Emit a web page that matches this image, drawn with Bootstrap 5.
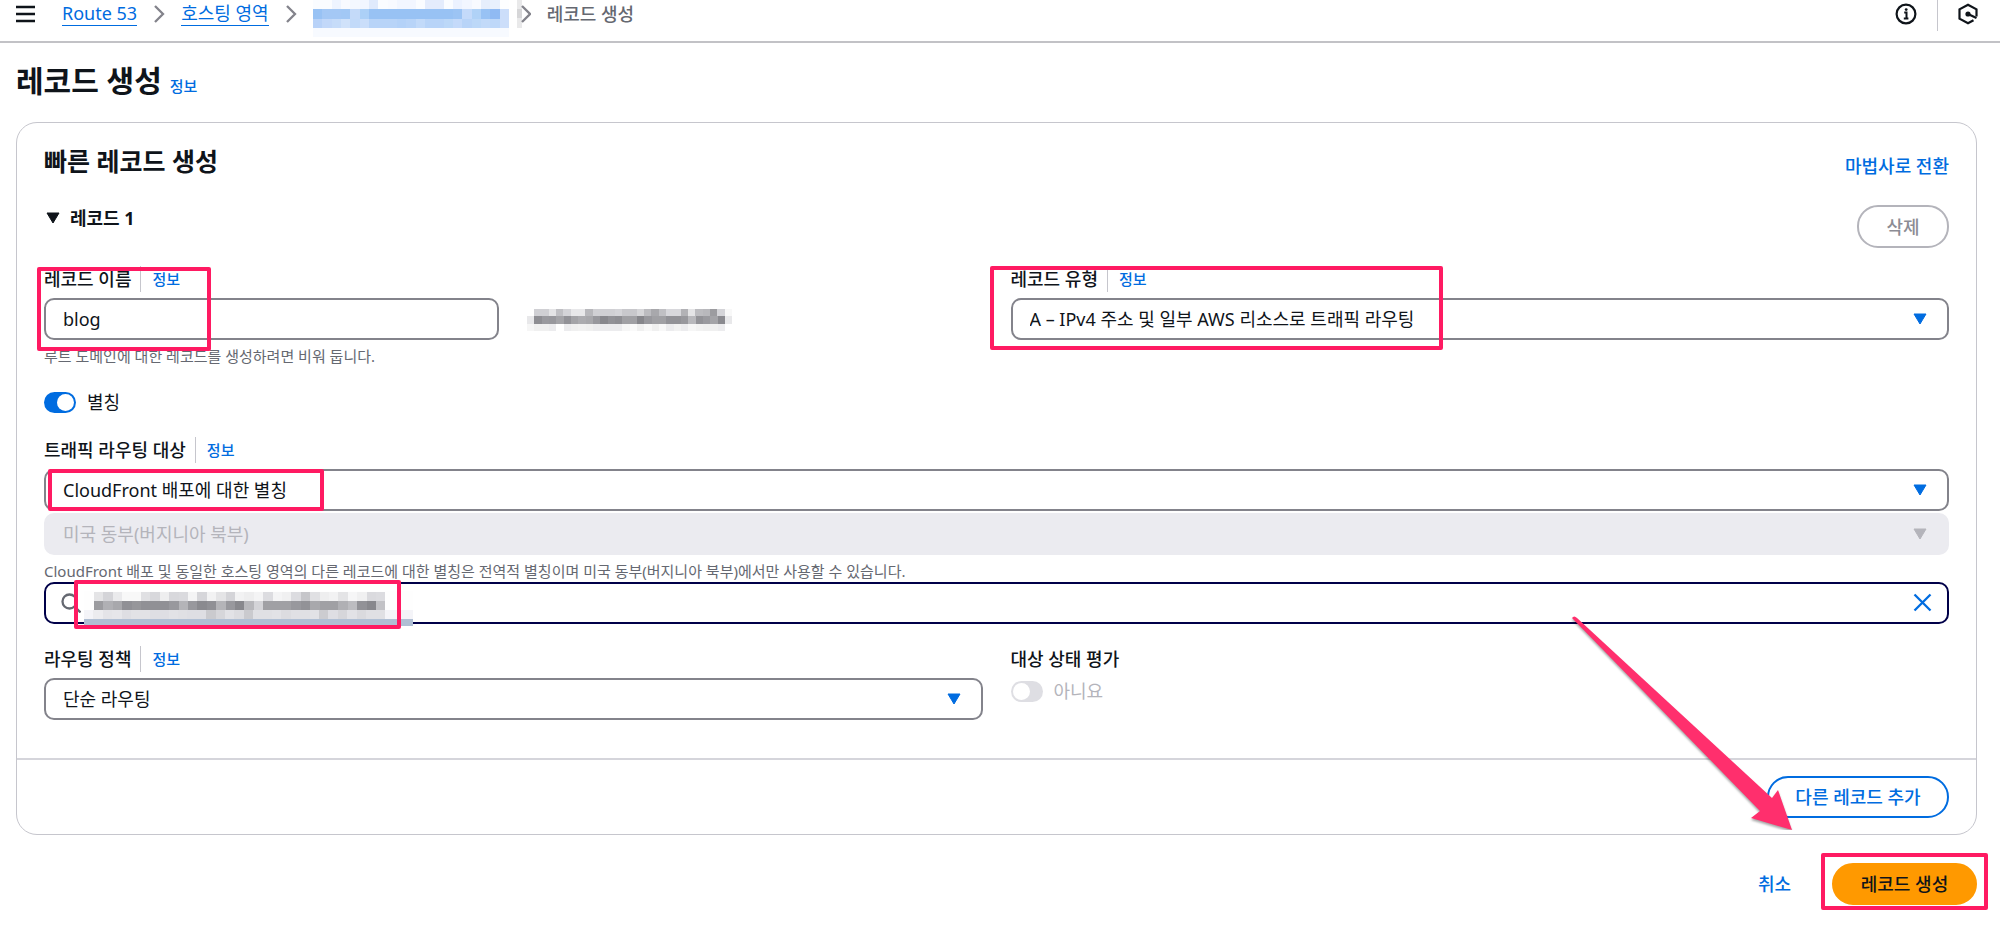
<!DOCTYPE html>
<html lang="ko">
<head>
<meta charset="utf-8">
<meta name="viewport" content="width=device-width, initial-scale=1">
<title>레코드 생성 | Route 53</title>
<link href="https://cdn.jsdelivr.net/npm/bootstrap@5.3.0/dist/css/bootstrap.min.css" rel="stylesheet">
<style>
  :root { --blue: #006ce0; --ink: #0f141a; --muted-ink: #656871; --pink: #ff1a62; }
  body { font-family: "Noto Sans", "Noto Sans CJK KR", sans-serif; font-size: 18px; line-height: 26px; color: var(--ink); background: #fff; }
  a { color: var(--blue); text-decoration: none; }
  .topbar { height: 43px; border-bottom: 2px solid #c2c2c6; padding: 0 22px 0 16px; }
  .topbar .crumbs { height: 28px; gap: 16px; line-height: 22px; }
  .crumbs a { border-bottom: 1px solid var(--blue); line-height: 23px; }
  .crumbs .menu-btn { margin-right: 11px; }
  .topbar .last-crumb { color: var(--muted-ink); font-weight: 500; }
  .icon-btn { border: 0; background: none; padding: 0; color: var(--ink); display: flex; }
  .tools { gap: 20px; }
  .tool-sep { width: 1px; height: 31px; background: #c6c6cd; }
  main { padding: 18px 23px 0 16px; }
  .title-row { margin-bottom: 21px; }
  h1 { font-size: 30px; line-height: 40px; font-weight: 700; }
  h2 { font-size: 25px; line-height: 36px; font-weight: 700; }
  .info { font-size: 15px; font-weight: 500; }
  .panel { border: 1px solid #c6c6cd; border-radius: 21px; }
  .panel-main { padding: 20px 27px 38px; }
  .panel-foot { border-top: 2px solid #d5d5db; padding: 16px 27px; }
  .record-head { margin-top: 26px; }
  .wizard-link, .cancel { font-weight: 500; }
  .btn.pill { height: 42px; border-radius: 21px; border: 2px solid; font-size: 18px; font-weight: 500; padding: 0; background: #fff; line-height: 26px; }
  .btn.pill-off, .btn.pill-off:disabled { color: #8c8c94; border-color: #b4b4bb; width: 92px; height: 43px; opacity: 1; }
  .btn.pill-line { color: var(--blue); border-color: var(--blue); width: 182px; }
  .btn.pill-main, .btn.pill-main:hover { background: #ff9900; border-color: #ff9900; color: var(--ink); width: 145px; }
  .grid-2 { display: grid; grid-template-columns: 1fr 1fr; column-gap: 28px; }
  .first-fields { margin-top: 18px; }
  .label-row { display: flex; align-items: center; height: 26px; margin-bottom: 6px; }
  .label-row label, .label-row .name { font-weight: 500; }
  .label-row .info { border-left: 1px solid #c6c6cd; margin-left: 9px; padding-left: 11px; }
  .field.form-control, .field.form-select { height: 42px; border: 2px solid #83838b; border-radius: 10px; padding: 0 17px; font-size: 18px; line-height: 26px; color: var(--ink); }
  .field.form-select { background-image: url("data:image/svg+xml,%3Csvg xmlns='http://www.w3.org/2000/svg' viewBox='0 0 14 12'%3E%3Cpath d='M1 1h12L7 11z' fill='%23006ce0' stroke='%23006ce0' stroke-linejoin='round'/%3E%3C/svg%3E"); background-size: 14px 12px; background-position: right 20px center; }
  .field.form-select:disabled { background-color: #ebebf0; border-color: #ebebf0; color: #b4b4bb; opacity: 1; background-image: url("data:image/svg+xml,%3Csvg xmlns='http://www.w3.org/2000/svg' viewBox='0 0 14 12'%3E%3Cpath d='M1 1h12L7 11z' fill='%23b4b4bb' stroke='%23b4b4bb' stroke-linejoin='round'/%3E%3C/svg%3E"); }
  .field.search-field { border-color: #000049; padding-left: 48px; }
  .region { margin-top: 2px; }
  .hint { font-size: 15px; line-height: 22px; margin-top: 5px; color: var(--muted-ink); }
  .toggle-row { display: flex; align-items: center; gap: 11px; height: 26px; }
  .form-check-input.toggle { width: 32px; height: 21px; margin: 0; border: 0; border-radius: 11px; background-color: #dedee3; background-size: 17px; background-position: 2px center; background-image: url("data:image/svg+xml,%3Csvg xmlns='http://www.w3.org/2000/svg' viewBox='0 0 17 17'%3E%3Ccircle cx='8.5' cy='8.5' r='8.5' fill='%23fff'/%3E%3C/svg%3E"); }
  .form-check-input.toggle:checked { background-color: var(--blue); background-position: 13px center; }
  .form-check-input.toggle:disabled, .form-check-input.toggle:disabled ~ label { opacity: 1; }
  .off-text { color: #b4b4bb; }
  .block-gap { margin-top: 22px; }
  .actions { margin: 28px 0; gap: 41px; }
  .section-note { position: relative; }
  .callout { position: absolute; border: 4px solid var(--pink); border-radius: 2px; pointer-events: none; }
  .callout-name { left: -7px; top: 1px; width: 174px; height: 84px; }
  .callout-type { left: -21px; top: 0; width: 453px; height: 84px; }
  .callout-target { left: 4px; top: 0; width: 276px; height: 42px; }
  .callout-search { left: 30px; top: -2px; width: 327px; height: 49px; }
  .callout-submit { right: -11px; top: -10px; width: 167px; height: 57px; }
  .lens { position: absolute; left: 17px; top: 11px; }
  .clear { position: absolute; right: 17px; top: 11px; color: var(--blue); }
  .search-mask { position: absolute; left: 40px; top: 9px; }
  .arrow { position: absolute; right: 182px; bottom: 4px; pointer-events: none; }
</style>
</head>
<body>
<header class="topbar d-flex justify-content-between align-items-start">
  <nav class="crumbs d-flex align-items-center" aria-label="breadcrumb">
    <button class="icon-btn menu-btn" aria-label="메뉴"><svg width="19" height="18" viewBox="0 0 19 18" stroke="currentColor" stroke-width="2.4"><path d="M0 2h19M0 9h19M0 16h19"/></svg></button>
    <a href="#">Route 53</a>
    <svg width="12" height="18" viewBox="0 0 12 18" fill="none" stroke="#83838b" stroke-width="2.3"><path d="M2 1l8 8-8 8"/></svg>
    <a href="#">호스팅 영역</a>
    <svg width="12" height="18" viewBox="0 0 12 18" fill="none" stroke="#83838b" stroke-width="2.3"><path d="M2 1l8 8-8 8"/></svg>
    <span class="d-flex align-items-start align-self-start gap-2">
      <svg class="flex-shrink-0" id="zoneMask" width="196" height="37" viewBox="0 0 196 37" shape-rendering="crispEdges"></svg>
      <svg class="flex-shrink-0" width="14" height="28" viewBox="0 0 14 28" fill="none"><path d="M0 0h5v28H0z" fill="#e9e9ea"/><path d="M0 9h5v9H0z" fill="#d6d6d8"/><path d="M5 6l8 8-8 8" stroke="#83838b" stroke-width="2.3"/></svg>
    </span>
    <span class="last-crumb">레코드 생성</span>
  </nav>
  <div class="tools d-flex align-items-start">
    <button class="icon-btn" aria-label="정보"><svg width="22" height="28" viewBox="0 0 22 28" fill="none" stroke="currentColor"><circle cx="11" cy="14" r="9.4" stroke-width="2.2"/><path d="M9.200 12.600h2.300v6M8.800 18.600h4.600" stroke-width="2"/><circle cx="11.200" cy="9.600" r="1.400" fill="currentColor" stroke="none"/></svg></button>
    <div class="tool-sep"></div>
    <button class="icon-btn" aria-label="리소스"><svg width="20" height="28" viewBox="0 0 20 28" fill="none" stroke="currentColor" stroke-width="2.200"><path d="M18.500 16.500V9.300L10 4.700 1.500 9.300v9.400L10 23.300l5.500-3"/><path d="M10 14l8.500 4" stroke-width="2.400"/><circle cx="10" cy="14" r="2.600" fill="currentColor" stroke="none"/></svg></button>
  </div>
</header>

<main>
  <div class="title-row d-flex align-items-baseline gap-2">
    <h1 class="mb-0">레코드 생성</h1><a class="info" href="#">정보</a>
  </div>

  <form>
  <section class="panel position-relative">
    <div class="panel-main">
      <div class="d-flex justify-content-between align-items-end">
        <h2 class="mb-0">빠른 레코드 생성</h2><a class="wizard-link" href="#">마법사로 전환</a>
      </div>
      <div class="record-head d-flex justify-content-between align-items-start">
        <button type="button" class="icon-btn align-items-center gap-2 fw-bold"><svg width="18" height="12" viewBox="0 0 18 12"><path d="M3 1h12L9 11z" fill="#0f141a" stroke="#0f141a" stroke-linejoin="round"/></svg>레코드 1</button>
        <button type="button" class="btn pill pill-off" disabled>삭제</button>
      </div>

      <div class="grid-2 first-fields">
        <div class="section-note">
          <div class="label-row"><label for="rname">레코드 이름</label><a class="info" href="#">정보</a></div>
          <div class="grid-2 align-items-center">
            <input id="rname" class="form-control field" type="text" value="blog">
            <svg id="domainMask" width="205" height="24" viewBox="0 0 205 24" shape-rendering="crispEdges"></svg>
          </div>
          <div class="hint">루트 도메인에 대한 레코드를 생성하려면 비워 둡니다.</div>
          <div class="callout callout-name"></div>
        </div>
        <div class="section-note">
          <div class="label-row"><label for="rtype">레코드 유형</label><a class="info" href="#">정보</a></div>
          <select id="rtype" class="form-select field"><option>A – IPv4 주소 및 일부 AWS 리소스로 트래픽 라우팅</option></select>
          <div class="callout callout-type"></div>
        </div>
      </div>

      <div class="toggle-row block-gap"><input class="form-check-input toggle" type="checkbox" role="switch" id="alias" checked><label for="alias">별칭</label></div>

      <div class="label-row block-gap"><label for="target">트래픽 라우팅 대상</label><a class="info" href="#">정보</a></div>
      <div class="section-note">
        <select id="target" class="form-select field"><option>CloudFront 배포에 대한 별칭</option></select>
        <div class="callout callout-target"></div>
      </div>
      <select class="form-select field region" aria-label="리전" disabled><option>미국 동부(버지니아 북부)</option></select>
      <div class="hint">CloudFront 배포 및 동일한 호스팅 영역의 다른 레코드에 대한 별칭은 전역적 별칭이며 미국 동부(버지니아 북부)에서만 사용할 수 있습니다.</div>
      <div class="section-note">
        <input class="form-control field search-field" type="text" aria-label="배포 선택">
        <svg class="lens" width="20" height="20" viewBox="0 0 20 20" fill="none" stroke="#656871" stroke-width="2.3"><circle cx="8.500" cy="8.500" r="7"/><path d="M13.500 13.500l6 6"/></svg>
        <button type="button" class="icon-btn clear" aria-label="지우기"><svg width="19" height="19" viewBox="0 0 19 19" stroke="currentColor" stroke-width="2.3"><path d="M1.500 1.500l16 16M17.500 1.500l-16 16"/></svg></button>
        <svg class="search-mask" id="searchMask" width="330" height="35" viewBox="0 0 330 35" shape-rendering="crispEdges"></svg>
        <div class="callout callout-search"></div>
      </div>

      <div class="grid-2 block-gap">
        <div>
          <div class="label-row"><label for="policy">라우팅 정책</label><a class="info" href="#">정보</a></div>
          <select id="policy" class="form-select field"><option>단순 라우팅</option></select>
        </div>
        <div>
          <div class="label-row"><span class="name">대상 상태 평가</span></div>
          <div class="toggle-row"><input class="form-check-input toggle" type="checkbox" role="switch" id="health" disabled><label class="off-text" for="health">아니요</label></div>
        </div>
      </div>
    </div>
    <div class="panel-foot d-flex justify-content-end">
      <button type="button" class="btn pill pill-line">다른 레코드 추가</button>
    </div>
    <svg class="arrow" width="226" height="216" viewBox="0 0 226 216"><path d="M4 4Q6 1 9 4L204 184 210 176 224 216 183 204 192 197Z" fill="#ff2f6d" style="filter:drop-shadow(0 2px 1px rgba(0,0,0,.35))"/></svg>
  </section>

  <div class="actions d-flex justify-content-end align-items-center">
    <a class="cancel" href="#">취소</a>
    <div class="section-note">
      <button type="submit" class="btn pill pill-main d-block">레코드 생성</button>
      <div class="callout callout-submit"></div>
    </div>
  </div>
  </form>
</main>
<script src="https://cdn.jsdelivr.net/npm/bootstrap@5.3.0/dist/js/bootstrap.bundle.min.js"></script>
<script>
  // Redaction mosaics: each row is y, height, cell width, left offset and one colour per cell.
  function mosaic(id, rows) {
    const svg = document.getElementById(id);
    rows.forEach(([y, h, w, x0, cells]) => cells.split(' ').forEach((c, i) => {
      const x = Math.round(x0 + i * w), r = document.createElementNS('http://www.w3.org/2000/svg', 'rect');
      r.setAttribute('x', x); r.setAttribute('y', y); r.setAttribute('height', h);
      r.setAttribute('width', Math.round(x0 + (i + 1) * w) - x); r.setAttribute('fill', '#' + c);
      svg.appendChild(r);
    }));
  }
  mosaic('zoneMask', [
    [0, 9, 9.33, 0, 'fafcff fafcff eef4ff f8faff f4f8ff f2f6ff e0eafc fafcff f8faff f2f6ff f2f6ff fafcff e4ecfc e4ecfc fafcff ecf2ff f2f6ff f8faff e6eefc e8f0fd fdfeff'],
    [9, 10, 9.33, 0, '98c2f4 a4c8f5 a4c8f5 a2c8f5 c4daf9 acd0f7 98c2f4 98c2f4 98c2f4 98c2f4 98c2f4 98c2f4 98c2f4 98c2f4 98c2f4 9cc4f4 c4dafa b0d2f7 98c2f4 90baf3 ccdefa'],
    [19, 9, 9.33, 0, 'b8d2f8 c2d8f9 c6dcf9 d0e2fa c2daf9 cadefa b8d4f8 b8d4f8 b8d4f8 b4d2f8 b8d4f8 c2daf9 b8d4f8 b8d4f8 bcd8f8 c4dafa b8d4f8 bcd8f8 c2daf9 bed8f9 ccdefa'],
    [28, 9, 196, 0, 'f7faff']]);
  mosaic('domainMask', [
    [2, 7, 7.33, 7, 'd0d0d4 d0d0d4 e4e4e6 c0c0c4 d4d4d8 e8e8ea e8e8ea b8b8bc d0d0d4 d0d0d4 d0d0d4 d4d4d8 c8c8cc c8c8cc d6d6d9 bcbcc0 a8a8ac c0c0c4 d8d8dc d8d8dc b2b2b6 e4e4e6 bcbcc0 b8b8bc 9c9ca0 d4d4d8 f8f8f8'],
    [9, 8, 7.33, 0, 'e8e8ea 8e8e93 9a9a9f 98989d a4a4a8 929297 a4a4a8 acacb0 a8a8ac 98989d 88888d 929297 8e8e93 a0a0a4 a0a0a4 86868b 98989d a0a0a4 a0a0a4 929297 929297 98989d b8b8bc 929297 9a9a9f a4a4a8 8a8a8f e8e8ea'],
    [17, 7, 7.33, 0, 'f6f6f6 f0f0f0 f0f0f0 ececee ffffff ececee f0f0f0 f2f2f2 f0f0f0 ececee ececee ececee ececee f6f6f6 fafafa f0f0f0 f8f8f8 f0f0f0 f8f8f8 ececee f2f2f2 ececee f6f6f6 f2f2f2 f0f0f0 f0f0f0 ececee']]);
  mosaic('searchMask', [
    [0, 28, 329, 0, 'fefefe'],
    [1, 9, 9.4, 10, 'e4e4e6 d4d4d8 eaeaec f8f8f8 f8f8f8 e0e0e3 d8d8dc eeeeef d8d8dc dadade f4f4f5 d6d6da f2f2f3 e4e4e6 d4d4d8 f2f2f3 eeeeef f4f4f5 dcdce0 f4f4f5 f0f0f1 dcdce0 c6c6ca e0e0e3 eeeeef f2f2f3 e4e4e6 f6f6f7 f0f0f1 dadade dcdce0'],
    [10, 9, 9.4, 10, '9c9ca0 b0b0b4 a8a8ac 909095 96969a 909095 909095 909095 98989d b4b4b8 98989d 8a8a8f 909095 b4b4b8 98989d 88888d b8b8bc d4d4d8 a0a0a4 a0a0a4 a0a0a4 98989d 929297 a8a8ac a0a0a4 a0a0a4 b0b0b4 bcbcc0 929297 88888d c2c2c6'],
    [19, 9, 9.4, 0, 'f4f4f8 ececef e4e4e8 e6e6ea dedee3 e2e2e6 e2e2e6 dedee3 dedee3 e2e2e6 e0e0e4 dedee3 dedee3 cacace d6d6da e2e2e6 dcdce0 cacace e0e0e4 e0e0e4 e2e2e6 dcdce0 e0e0e4 e0e0e4 e2e2e6 ccccd0 dedee3 d6d6da e2e2e6 dadade e0e0e4 e0e0e4 f4f4f8 f4f4f8 f4f4f8'],
    [28, 7, 329, 0, 'b0bfd4']]);
</script>
</body>
</html>
